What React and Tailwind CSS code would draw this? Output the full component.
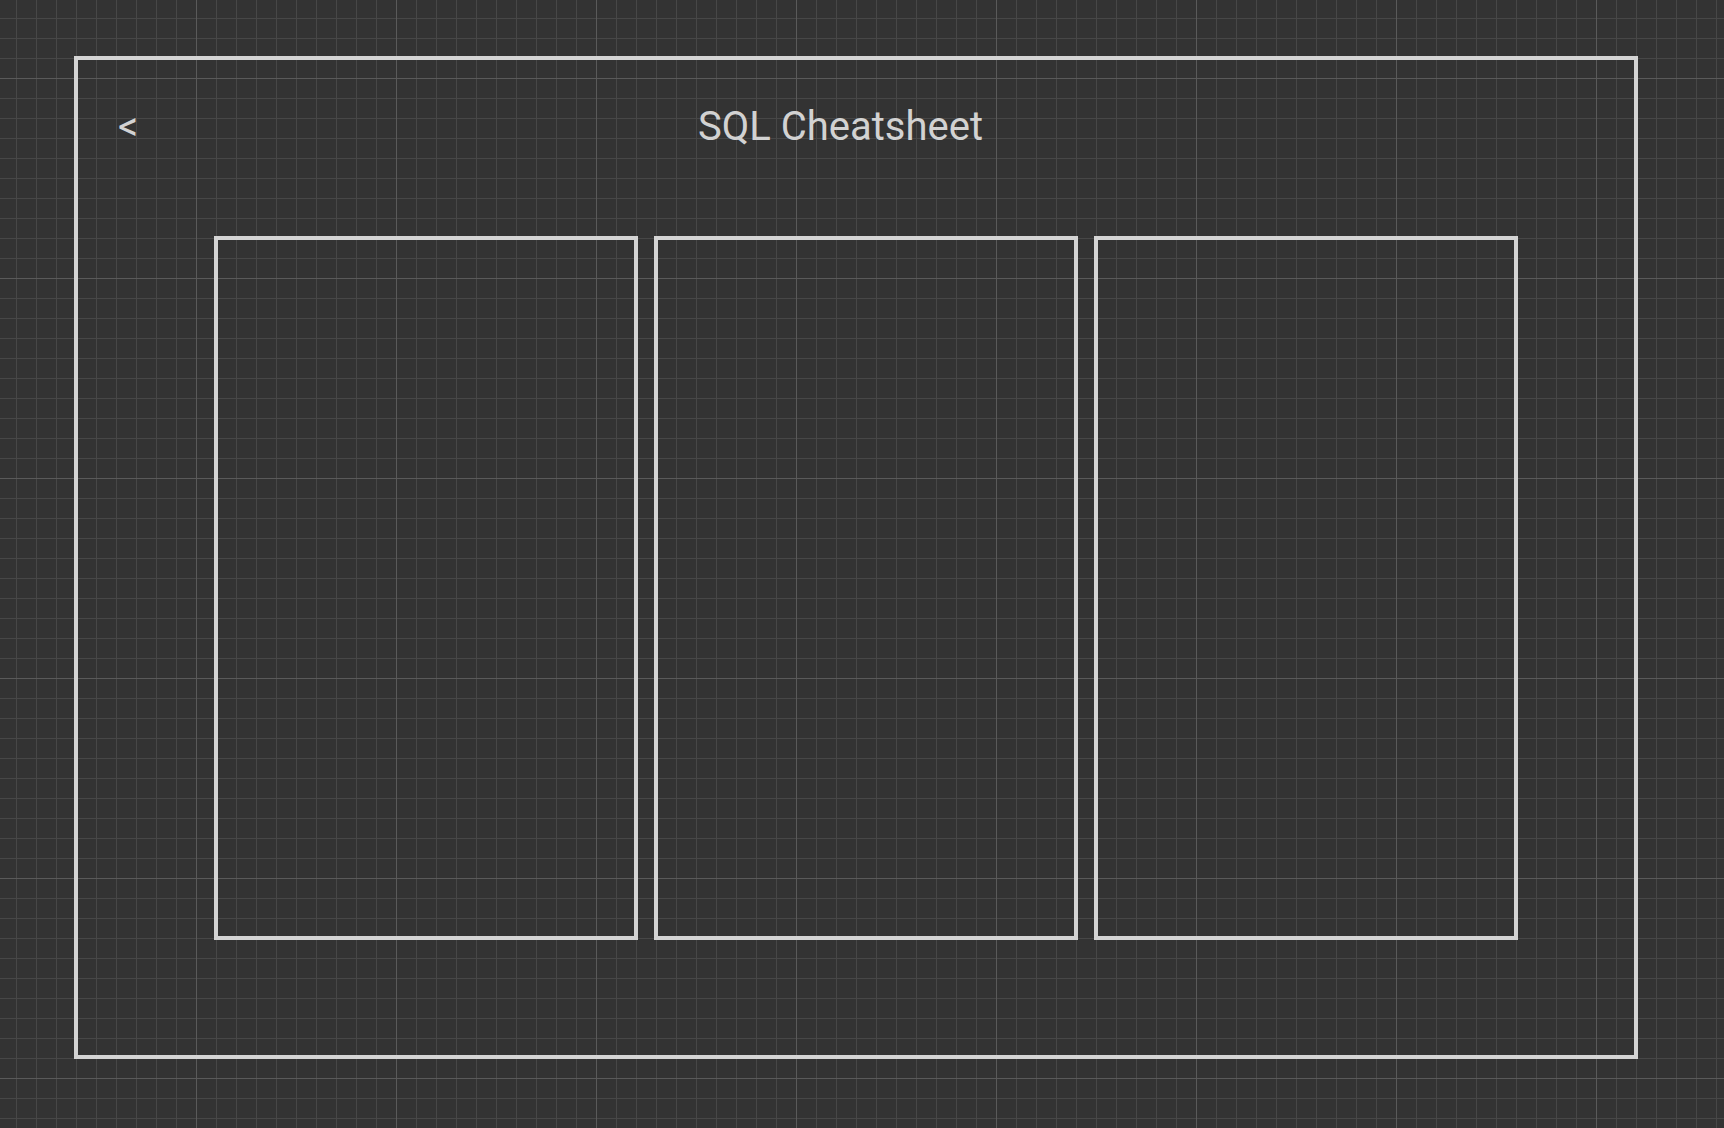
import React from 'react';

const Card = () => (
  <div className="w-[424px] h-[704px] border-4 border-[#d4d4d4] shrink-0" />
);

export default function App() {
  return (
    <div
      className="w-[1724px] h-[1128px] overflow-hidden bg-[#333333] bg-[image:linear-gradient(to_right,#5a5a5a_1px,transparent_1px),linear-gradient(to_bottom,#5a5a5a_1px,transparent_1px),linear-gradient(to_right,#474747_1px,transparent_1px),linear-gradient(to_bottom,#474747_1px,transparent_1px)] bg-[size:200px_200px,200px_200px,20px_20px,20px_20px] bg-[position:196px_78px,196px_78px,16px_18px,16px_18px] pt-[56px] pl-[74px] font-['Roboto',sans-serif]"
    >
      {/* Frame */}
      <div className="w-[1564px] h-[1003px] border-4 border-[#d4d4d4] flex flex-col">
        {/* Header */}
        <div className="flex items-baseline pt-[47px] pl-[40px] text-[40px] leading-none text-[#d2d2d2]">
          <span className="w-[580px] shrink-0">&lt;</span>
          <span>SQL Cheatsheet</span>
        </div>

        {/* Columns */}
        <div className="flex gap-4 mt-[89px] pl-[136px]">
          <Card />
          <Card />
          <Card />
        </div>
      </div>
    </div>
  );
}
